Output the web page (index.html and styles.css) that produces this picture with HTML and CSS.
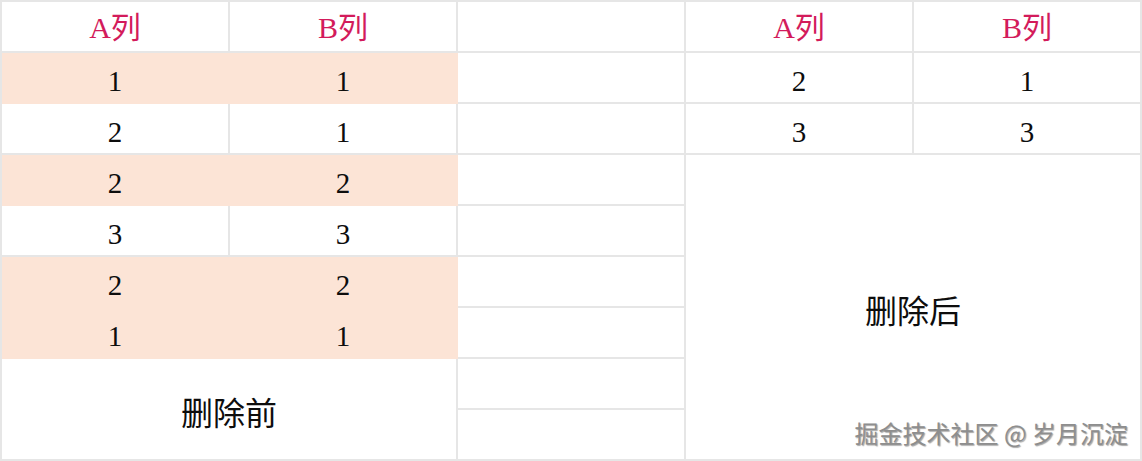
FILE: index.html
```html
<!DOCTYPE html>
<html lang="zh">
<head>
<meta charset="utf-8">
<title>删除前后</title>
<link rel="stylesheet" href="styles.css">
</head>
<body>
<div class="sheet">
  <div class="cell head">A列</div>
  <div class="cell head">B列</div>
  <div class="cell"></div>
  <div class="cell head">A列</div>
  <div class="cell head">B列</div>

  <div class="cell num fill">1</div>
  <div class="cell num fill">1</div>
  <div class="cell"></div>
  <div class="cell num">2</div>
  <div class="cell num">1</div>

  <div class="cell num">2</div>
  <div class="cell num">1</div>
  <div class="cell"></div>
  <div class="cell num">3</div>
  <div class="cell num">3</div>

  <div class="cell num fill">2</div>
  <div class="cell num fill">2</div>
  <div class="cell"></div>
  <div class="cell label after">删除后</div>

  <div class="cell num">3</div>
  <div class="cell num">3</div>
  <div class="cell"></div>

  <div class="cell num fill">2</div>
  <div class="cell num fill">2</div>
  <div class="cell"></div>

  <div class="cell num fill">1</div>
  <div class="cell num fill">1</div>
  <div class="cell"></div>

  <div class="cell label before">删除前</div>
  <div class="cell"></div>
  <div class="cell"></div>

  <div class="watermark">掘金技术社区 @ 岁月沉淀</div>
</div>
</body>
</html>
```

FILE: styles.css
```css
* { box-sizing: border-box; }
html, body {
  margin: 0;
  padding: 0;
  background: #ffffff;
}
.sheet {
  position: relative;
  width: 1142px;
  height: 461px;
  display: grid;
  grid-template-columns: repeat(5, 228px);
  grid-template-rows: repeat(9, 51px);
  border-top: 2px solid #e6e6e6;
  border-left: 2px solid #e6e6e6;
  font-family: "Liberation Serif", "Noto Sans CJK SC", serif;
  color: #0d0d0d;
}
.cell {
  border-right: 2px solid #e6e6e6;
  border-bottom: 2px solid #e6e6e6;
  display: flex;
  align-items: center;
  justify-content: center;
  font-size: 29px;
  line-height: 1;
}
.head {
  color: #d31b5b;
  font-size: 30px;
  padding-top: 3px;
}
.num {
  padding-top: 8px;
}
.fill {
  background: #fce4d6;
  border-color: #fce4d6;
}
.label {
  font-size: 32px;
  padding-top: 10px;
}
.before {
  grid-column: 1 / span 2;
  grid-row: 8 / span 2;
}
.after {
  grid-column: 4 / span 2;
  grid-row: 4 / span 6;
}
.watermark {
  position: absolute;
  right: 14px;
  bottom: 16px;
  font-family: "Noto Sans CJK SC", sans-serif;
  font-size: 24px;
  line-height: 1;
  color: #8e8e8e;
  text-shadow: 1px 1px 1px rgba(0, 0, 0, 0.35), -1px -1px 0 rgba(255, 255, 255, 0.8);
}
```
